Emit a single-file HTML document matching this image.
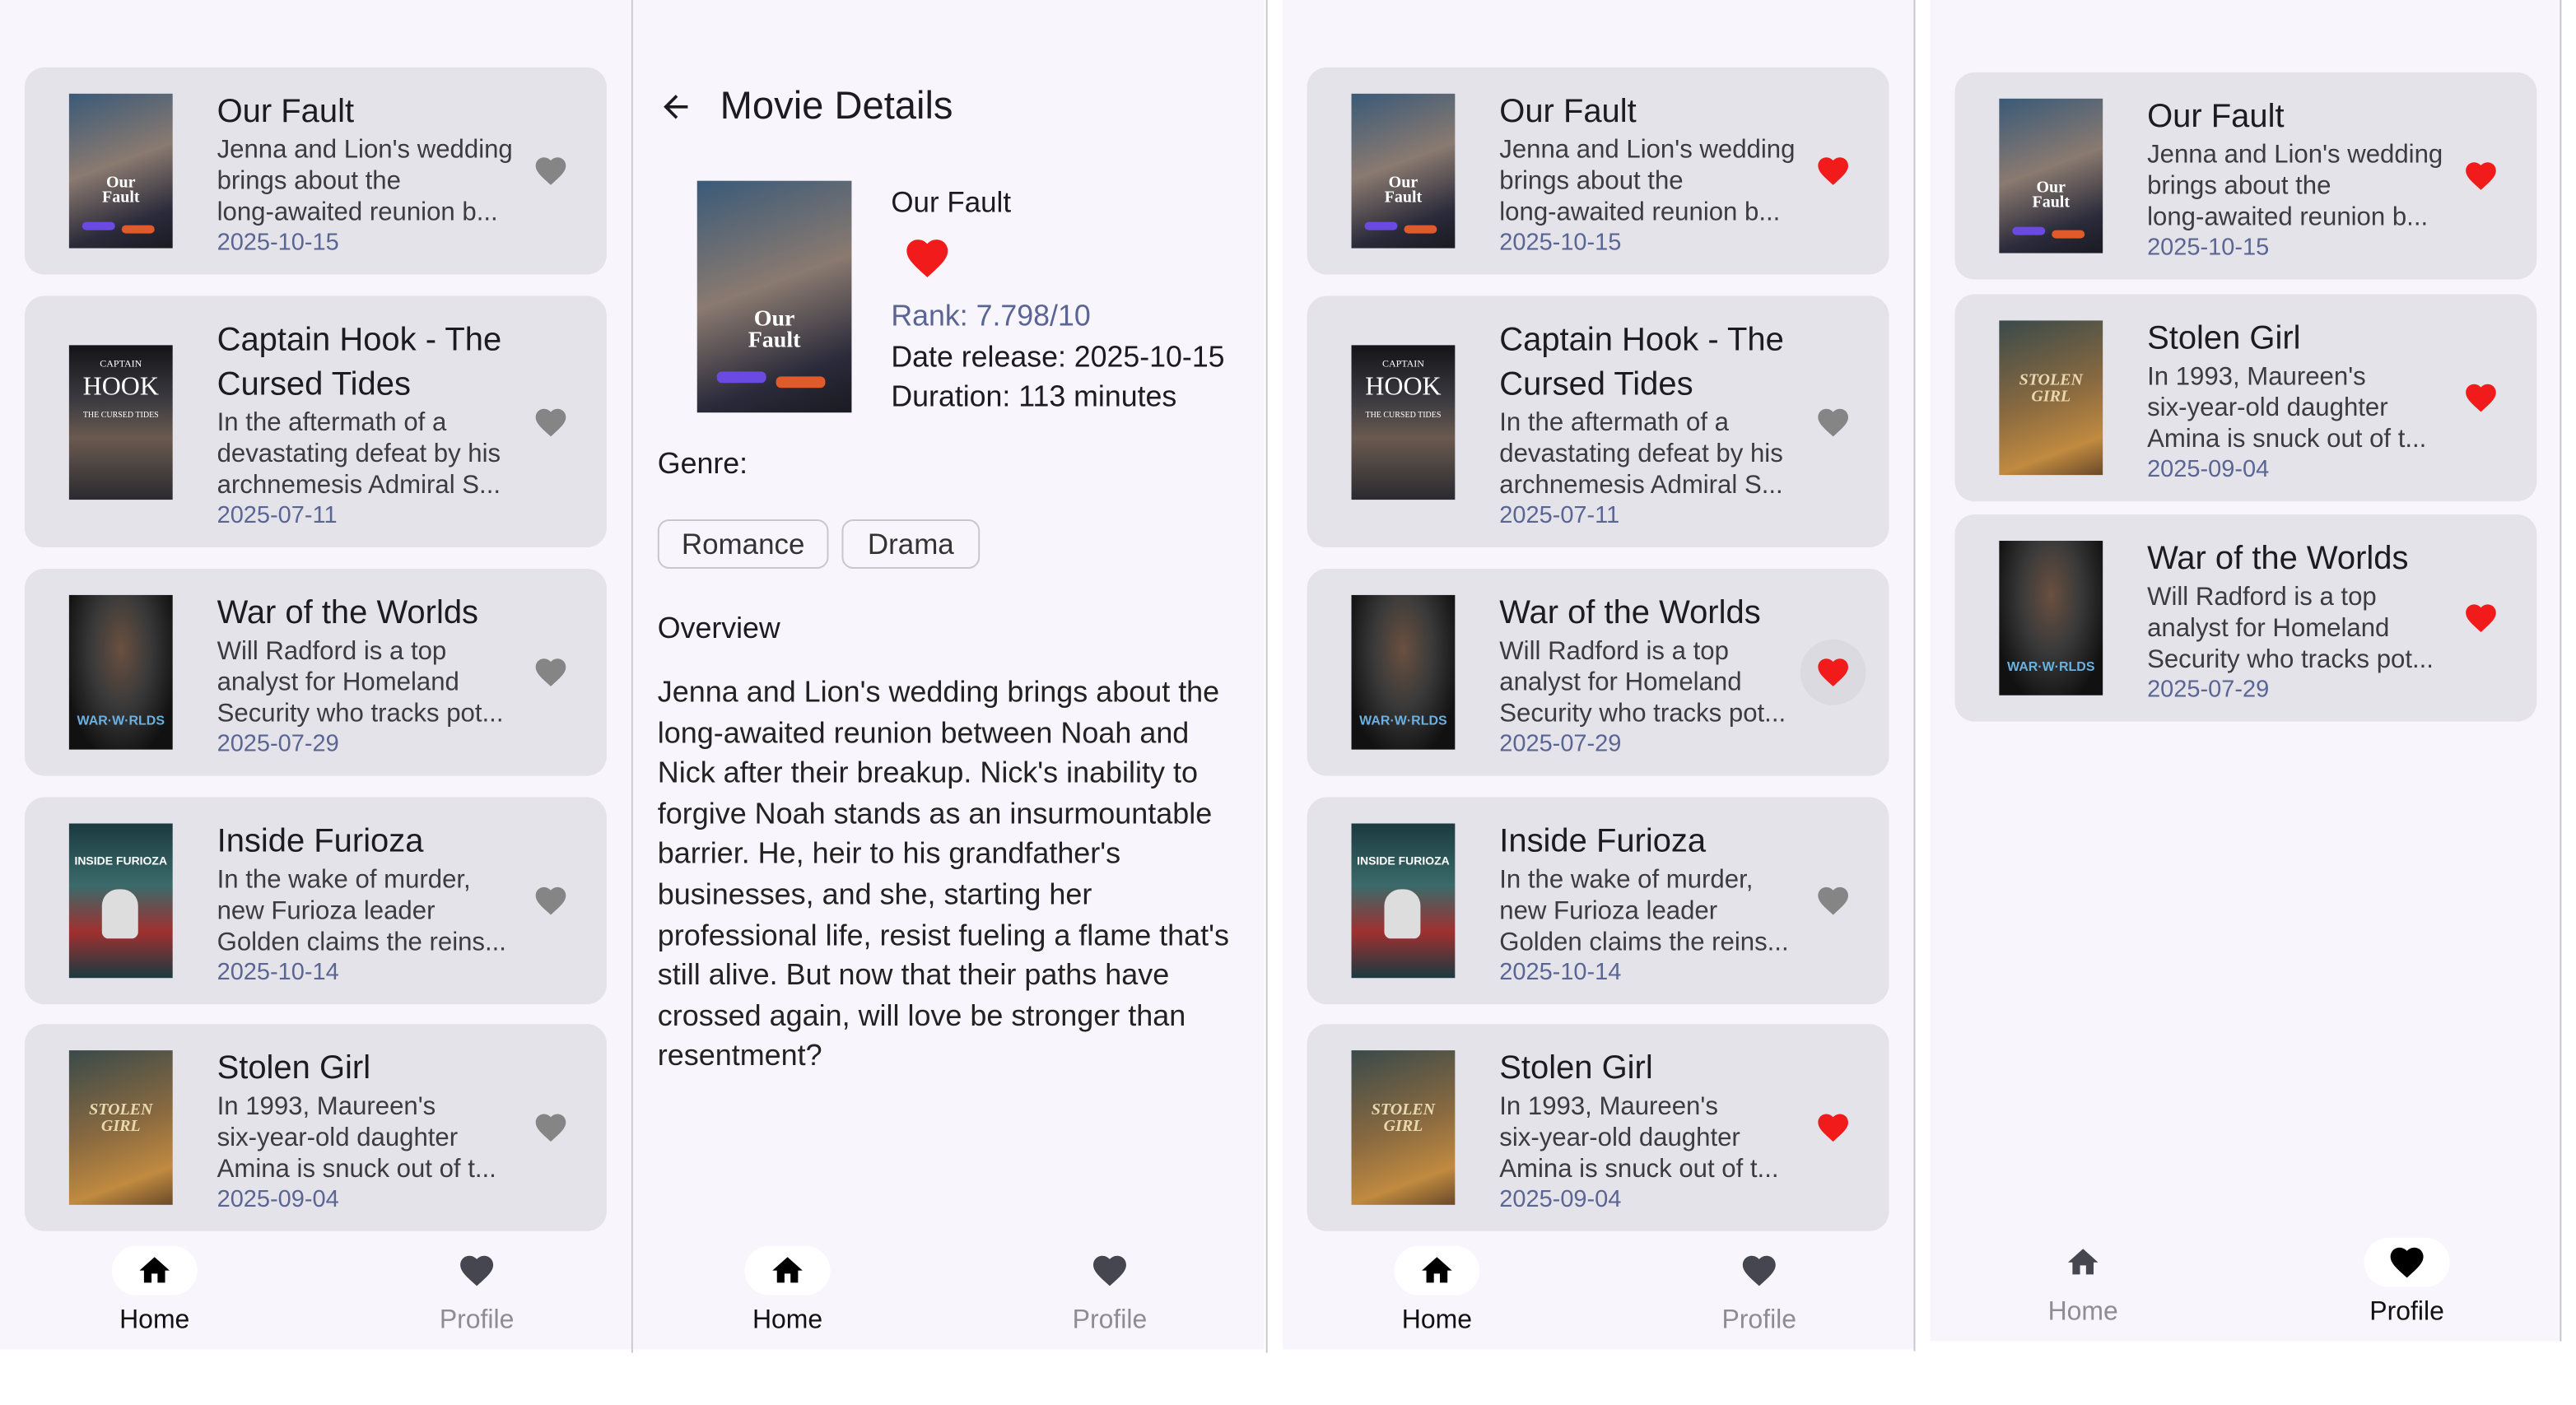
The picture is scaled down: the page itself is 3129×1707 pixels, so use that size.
<!DOCTYPE html>
<html><head><meta charset="utf-8">
<style>
*{margin:0;padding:0;box-sizing:border-box}
html,body{width:3129px;height:1707px;overflow:hidden;background:#fff}
#s{position:absolute;left:0;top:0;width:1570px;height:855px;transform:scale(1.997);transform-origin:0 0;font-family:"Liberation Sans",sans-serif;color:#1c1b1f}
.panel{position:absolute;top:0;background:#f8f6fc;width:384px}
.card{position:absolute;left:15px;width:354px;background:#e4e3e9;border-radius:12px;padding:13.5px 50px 9.5px 117px}
.poster{position:absolute;left:27px;top:50%;margin-top:-47px;width:63px;height:94px;overflow:hidden}
.t{font-size:20px;line-height:27px;white-space:nowrap}
.d{font-size:15.6px;line-height:19px;color:#3b3b40;white-space:nowrap}
.dt{font-size:14.5px;line-height:19px;color:#5a6594}
.hr{position:absolute;right:23px;top:50%;margin-top:-11px;width:22px;height:22px}
.vl{position:absolute;top:0;width:1px;background:#c9c8ce}
.nav{position:absolute;width:120px;text-align:center;font-size:16px}
.pill{width:52px;height:30px;border-radius:15px;margin:0 auto 7px;display:flex;align-items:center;justify-content:center}
.pt{position:absolute;font-family:"Liberation Serif",serif;color:#fff;text-align:center;width:100%;font-weight:bold}
</style></head><body>
<div id="s">
<svg width="0" height="0" style="position:absolute"><defs>
<path id="hp" d="M12 21.35l-1.45-1.32C5.4 15.36 2 12.28 2 8.5 2 5.42 4.42 3 7.5 3c1.74 0 3.41.81 4.5 2.09C13.09 3.81 14.76 3 16.5 3 19.58 3 22 5.420 22 8.5c0 3.78-3.4 6.860-8.55 11.54L12 21.35z"/>
<path id="ho" d="M10 20v-6h4v6h5v-8h3L12 3 2 12h3v8z"/>
</defs></svg>

<!-- PANEL 1 -->
<div class="panel" style="left:0;height:821px">
 <div class="card" style="top:41px"><div class="poster" style="background:linear-gradient(160deg,#3a5a78 0%,#8a7a70 45%,#2a2a3a 80%,#1a1a22)"><div class="pt" style="top:50px;font-size:10px;line-height:9px">Our<br>Fault</div><div style="position:absolute;left:8px;top:78px;width:20px;height:5px;background:#6a4ae0;border-radius:3px"></div><div style="position:absolute;left:32px;top:80px;width:20px;height:5px;background:#e05a2a;border-radius:3px"></div></div>
  <div class="t">Our Fault</div><div class="d">Jenna and Lion's wedding<br>brings about the<br>long-awaited reunion b...</div><div class="dt">2025-10-15</div>
  <svg class="hr" viewBox="0 0 24 24" fill="#858585"><use href="#hp"/></svg></div>
 <div class="card" style="top:180px"><div class="poster" style="background:linear-gradient(180deg,#141418 0%,#3a3a40 35%,#6a5a50 60%,#2a2a30)"><div class="pt" style="top:2px;font-size:16px;line-height:14px;font-weight:normal"><span style="font-size:6px">CAPTAIN</span><br>HOOK<br><span style="font-size:5px">THE CURSED TIDES</span></div></div>
  <div class="t">Captain Hook - The<br>Cursed Tides</div><div class="d">In the aftermath of a<br>devastating defeat by his<br>archnemesis Admiral S...</div><div class="dt">2025-07-11</div>
  <svg class="hr" viewBox="0 0 24 24" fill="#858585"><use href="#hp"/></svg></div>
 <div class="card" style="top:346px"><div class="poster" style="background:radial-gradient(ellipse at 50% 35%,#6a5040 0%,#3a3a3a 40%,#111 80%)"><div class="pt" style="top:72px;font-size:8px;color:#6ab0e0;font-family:'Liberation Sans'">WAR&middot;W&middot;RLDS</div></div>
  <div class="t">War of the Worlds</div><div class="d">Will Radford is a top<br>analyst for Homeland<br>Security who tracks pot...</div><div class="dt">2025-07-29</div>
  <svg class="hr" viewBox="0 0 24 24" fill="#858585"><use href="#hp"/></svg></div>
 <div class="card" style="top:485px"><div class="poster" style="background:linear-gradient(180deg,#1a3a40 0%,#3a6a6a 40%,#a03030 70%,#1a3a40)"><div class="pt" style="top:20px;font-size:7px;font-family:'Liberation Sans'">INSIDE FURIOZA</div><div style="position:absolute;left:20px;top:40px;width:22px;height:30px;background:#ddd;border-radius:10px 10px 4px 4px"></div></div>
  <div class="t">Inside Furioza</div><div class="d">In the wake of murder,<br>new Furioza leader<br>Golden claims the reins...</div><div class="dt">2025-10-14</div>
  <svg class="hr" viewBox="0 0 24 24" fill="#858585"><use href="#hp"/></svg></div>
 <div class="card" style="top:623px"><div class="poster" style="background:linear-gradient(160deg,#3a4a4a 0%,#8a6a40 50%,#c08a40 80%,#6a4a2a)"><div class="pt" style="top:32px;font-size:10px;line-height:10px;font-style:italic;color:#e8d8b0">STOLEN<br>GIRL</div></div>
  <div class="t">Stolen Girl</div><div class="d">In 1993, Maureen's<br>six-year-old daughter<br>Amina is snuck out of t...</div><div class="dt">2025-09-04</div>
  <svg class="hr" viewBox="0 0 24 24" fill="#858585"><use href="#hp"/></svg></div>
 <div class="nav" style="left:34px;top:758px"><div class="pill" style="background:#fff"><svg width="22" height="22" viewBox="0 0 24 24" fill="#000"><use href="#ho"/></svg></div><div style="color:#111">Home</div></div>
 <div class="nav" style="left:230px;top:758px"><div class="pill"><svg width="24" height="24" viewBox="0 0 24 24" fill="#45464f"><use href="#hp"/></svg></div><div style="color:#8d8d92">Profile</div></div>
</div>
<div class="vl" style="left:384px;height:823px"></div>

<!-- PANEL 2 -->
<div class="panel" style="left:385px;height:821px">
 <svg style="position:absolute;left:15px;top:54px" width="22" height="22" viewBox="0 0 24 24" fill="#1c1b1f"><path d="M20 11H7.83l5.59-5.59L12 4l-8 8 8 8 1.41-1.41L7.83 13H20v-2z"/></svg>
 <div style="position:absolute;left:53px;top:50px;font-size:23.6px;line-height:30px">Movie Details</div>
 <div style="position:absolute;left:39px;top:110px;width:94px;height:141px;background:linear-gradient(160deg,#3a5a78 0%,#8a7a70 45%,#2a2a3a 80%,#1a1a22);overflow:hidden"><div class="pt" style="top:78px;font-size:14px;line-height:13px">Our<br>Fault</div><div style="position:absolute;left:12px;top:116px;width:30px;height:7px;background:#6a4ae0;border-radius:3px"></div><div style="position:absolute;left:48px;top:119px;width:30px;height:7px;background:#e05a2a;border-radius:3px"></div></div>
 <div style="position:absolute;left:157px;top:112px;font-size:17.5px;line-height:22px">Our Fault</div>
 <svg style="position:absolute;left:164px;top:142px" width="30" height="30" viewBox="0 0 24 24" fill="#f21b1b"><use href="#hp"/></svg>
 <div style="position:absolute;left:157px;top:180px;font-size:17.9px;line-height:24.6px;white-space:nowrap"><span style="color:#5a6594">Rank: 7.798/10</span><br>Date release: 2025-10-15<br>Duration: 113 minutes</div>
 <div style="position:absolute;left:15px;top:271px;font-size:17.9px;line-height:22px">Genre:</div>
 <div style="position:absolute;left:15px;top:316px;width:104px;height:30px;border:1px solid #c8c7cd;border-radius:7px;font-size:17.5px;line-height:28px;text-align:center;color:#333">Romance</div>
 <div style="position:absolute;left:127px;top:316px;width:84px;height:30px;border:1px solid #c8c7cd;border-radius:7px;font-size:17.5px;line-height:28px;text-align:center;color:#333">Drama</div>
 <div style="position:absolute;left:15px;top:371px;font-size:17.9px;line-height:22px">Overview</div>
 <div style="position:absolute;left:15px;top:409px;font-size:18px;line-height:24.6px;white-space:nowrap;color:#222">Jenna and Lion's wedding brings about the<br>long-awaited reunion between Noah and<br>Nick after their breakup. Nick's inability to<br>forgive Noah stands as an insurmountable<br>barrier. He, heir to his grandfather's<br>businesses, and she, starting her<br>professional life, resist fueling a flame that's<br>still alive. But now that their paths have<br>crossed again, will love be stronger than<br>resentment?</div>
 <div class="nav" style="left:34px;top:758px"><div class="pill" style="background:#fff"><svg width="22" height="22" viewBox="0 0 24 24" fill="#000"><use href="#ho"/></svg></div><div style="color:#111">Home</div></div>
 <div class="nav" style="left:230px;top:758px"><div class="pill"><svg width="24" height="24" viewBox="0 0 24 24" fill="#45464f"><use href="#hp"/></svg></div><div style="color:#8d8d92">Profile</div></div>
</div>
<div class="vl" style="left:770px;height:823px"></div>

<!-- PANEL 3 -->
<div class="panel" style="left:780px;height:821px">
 <div class="card" style="top:41px"><div class="poster" style="background:linear-gradient(160deg,#3a5a78 0%,#8a7a70 45%,#2a2a3a 80%,#1a1a22)"><div class="pt" style="top:50px;font-size:10px;line-height:9px">Our<br>Fault</div><div style="position:absolute;left:8px;top:78px;width:20px;height:5px;background:#6a4ae0;border-radius:3px"></div><div style="position:absolute;left:32px;top:80px;width:20px;height:5px;background:#e05a2a;border-radius:3px"></div></div>
  <div class="t">Our Fault</div><div class="d">Jenna and Lion's wedding<br>brings about the<br>long-awaited reunion b...</div><div class="dt">2025-10-15</div>
  <svg class="hr" viewBox="0 0 24 24" fill="#f21b1b"><use href="#hp"/></svg></div>
 <div class="card" style="top:180px"><div class="poster" style="background:linear-gradient(180deg,#141418 0%,#3a3a40 35%,#6a5a50 60%,#2a2a30)"><div class="pt" style="top:2px;font-size:16px;line-height:14px;font-weight:normal"><span style="font-size:6px">CAPTAIN</span><br>HOOK<br><span style="font-size:5px">THE CURSED TIDES</span></div></div>
  <div class="t">Captain Hook - The<br>Cursed Tides</div><div class="d">In the aftermath of a<br>devastating defeat by his<br>archnemesis Admiral S...</div><div class="dt">2025-07-11</div>
  <svg class="hr" viewBox="0 0 24 24" fill="#858585"><use href="#hp"/></svg></div>
 <div class="card" style="top:346px"><div class="poster" style="background:radial-gradient(ellipse at 50% 35%,#6a5040 0%,#3a3a3a 40%,#111 80%)"><div class="pt" style="top:72px;font-size:8px;color:#6ab0e0;font-family:'Liberation Sans'">WAR&middot;W&middot;RLDS</div></div>
  <div class="t">War of the Worlds</div><div class="d">Will Radford is a top<br>analyst for Homeland<br>Security who tracks pot...</div><div class="dt">2025-07-29</div>
  <div style="position:absolute;right:14px;top:50%;margin-top:-20px;width:40px;height:40px;border-radius:50%;background:#dbdae1"></div>
  <svg class="hr" viewBox="0 0 24 24" fill="#f21b1b"><use href="#hp"/></svg></div>
 <div class="card" style="top:485px"><div class="poster" style="background:linear-gradient(180deg,#1a3a40 0%,#3a6a6a 40%,#a03030 70%,#1a3a40)"><div class="pt" style="top:20px;font-size:7px;font-family:'Liberation Sans'">INSIDE FURIOZA</div><div style="position:absolute;left:20px;top:40px;width:22px;height:30px;background:#ddd;border-radius:10px 10px 4px 4px"></div></div>
  <div class="t">Inside Furioza</div><div class="d">In the wake of murder,<br>new Furioza leader<br>Golden claims the reins...</div><div class="dt">2025-10-14</div>
  <svg class="hr" viewBox="0 0 24 24" fill="#858585"><use href="#hp"/></svg></div>
 <div class="card" style="top:623px"><div class="poster" style="background:linear-gradient(160deg,#3a4a4a 0%,#8a6a40 50%,#c08a40 80%,#6a4a2a)"><div class="pt" style="top:32px;font-size:10px;line-height:10px;font-style:italic;color:#e8d8b0">STOLEN<br>GIRL</div></div>
  <div class="t">Stolen Girl</div><div class="d">In 1993, Maureen's<br>six-year-old daughter<br>Amina is snuck out of t...</div><div class="dt">2025-09-04</div>
  <svg class="hr" viewBox="0 0 24 24" fill="#f21b1b"><use href="#hp"/></svg></div>
 <div class="nav" style="left:34px;top:758px"><div class="pill" style="background:#fff"><svg width="22" height="22" viewBox="0 0 24 24" fill="#000"><use href="#ho"/></svg></div><div style="color:#111">Home</div></div>
 <div class="nav" style="left:230px;top:758px"><div class="pill"><svg width="24" height="24" viewBox="0 0 24 24" fill="#45464f"><use href="#hp"/></svg></div><div style="color:#8d8d92">Profile</div></div>
</div>
<div class="vl" style="left:1164px;height:822px"></div>

<!-- PANEL 4 -->
<div class="panel" style="left:1174px;height:816px">
 <div class="card" style="top:44px"><div class="poster" style="background:linear-gradient(160deg,#3a5a78 0%,#8a7a70 45%,#2a2a3a 80%,#1a1a22)"><div class="pt" style="top:50px;font-size:10px;line-height:9px">Our<br>Fault</div><div style="position:absolute;left:8px;top:78px;width:20px;height:5px;background:#6a4ae0;border-radius:3px"></div><div style="position:absolute;left:32px;top:80px;width:20px;height:5px;background:#e05a2a;border-radius:3px"></div></div>
  <div class="t">Our Fault</div><div class="d">Jenna and Lion's wedding<br>brings about the<br>long-awaited reunion b...</div><div class="dt">2025-10-15</div>
  <svg class="hr" viewBox="0 0 24 24" fill="#f21b1b"><use href="#hp"/></svg></div>
 <div class="card" style="top:179px"><div class="poster" style="background:linear-gradient(160deg,#3a4a4a 0%,#8a6a40 50%,#c08a40 80%,#6a4a2a)"><div class="pt" style="top:32px;font-size:10px;line-height:10px;font-style:italic;color:#e8d8b0">STOLEN<br>GIRL</div></div>
  <div class="t">Stolen Girl</div><div class="d">In 1993, Maureen's<br>six-year-old daughter<br>Amina is snuck out of t...</div><div class="dt">2025-09-04</div>
  <svg class="hr" viewBox="0 0 24 24" fill="#f21b1b"><use href="#hp"/></svg></div>
 <div class="card" style="top:313px"><div class="poster" style="background:radial-gradient(ellipse at 50% 35%,#6a5040 0%,#3a3a3a 40%,#111 80%)"><div class="pt" style="top:72px;font-size:8px;color:#6ab0e0;font-family:'Liberation Sans'">WAR&middot;W&middot;RLDS</div></div>
  <div class="t">War of the Worlds</div><div class="d">Will Radford is a top<br>analyst for Homeland<br>Security who tracks pot...</div><div class="dt">2025-07-29</div>
  <svg class="hr" viewBox="0 0 24 24" fill="#f21b1b"><use href="#hp"/></svg></div>
 <div class="nav" style="left:33px;top:753px"><div class="pill"><svg width="22" height="22" viewBox="0 0 24 24" fill="#45464f"><use href="#ho"/></svg></div><div style="color:#8d8d92">Home</div></div>
 <div class="nav" style="left:230px;top:753px"><div class="pill" style="background:#fff"><svg width="24" height="24" viewBox="0 0 24 24" fill="#000"><use href="#hp"/></svg></div><div style="color:#111">Profile</div></div>
</div>
<div class="vl" style="left:1557px;height:816px"></div>
</div>
</body></html>
